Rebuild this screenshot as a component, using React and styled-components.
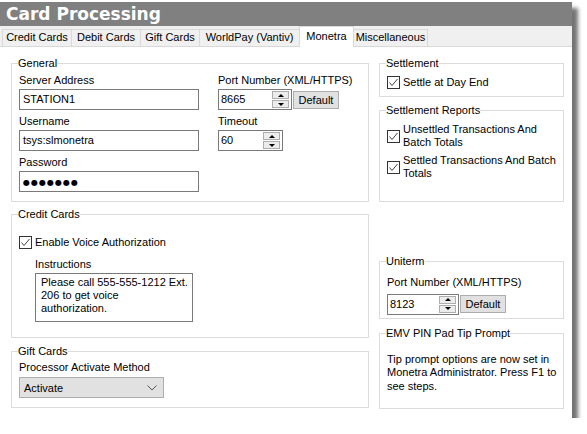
import styled, { createGlobalStyle } from "styled-components";

const GlobalStyle = createGlobalStyle`
  body {
    margin: 0;
    background: #fff;
    font-family: "Liberation Sans", Arial, sans-serif;
    font-size: 11px;
    color: #000;
  }
`;

const tabs = [
  { label: "Credit Cards", width: 70 },
  { label: "Debit Cards", width: 70 },
  { label: "Gift Cards", width: 60 },
  { label: "WorldPay (Vantiv)", width: 101 },
  { label: "Monetra", width: 55, active: true },
  { label: "Miscellaneous", width: 75 },
];

const Check = () => (
  <CheckBox>
    <svg width="11" height="11" viewBox="0 0 11 11">
      <polyline
        points="1.5,5.5 4,8.5 9.5,2"
        fill="none"
        stroke="#444"
        strokeWidth="1"
      />
    </svg>
  </CheckBox>
);

const Spinner = ({ value, width }) => (
  <SpinBox $w={width}>
    <SpinValue>{value}</SpinValue>
    <Arrows>
      <ArrowButton $up />
      <ArrowButton />
    </Arrows>
  </SpinBox>
);

const App = () => {
  return (
    <>
      <GlobalStyle />
      <Window>
        <TitleBar>Card Processing</TitleBar>
        <TabStrip>
          {tabs.map((tab) => (
            <Tab key={tab.label} $w={tab.width} $active={tab.active}>
              {tab.label}
            </Tab>
          ))}
        </TabStrip>
        <Content>
          <Column>
            <Group $pt={4} $pb={9}>
              <Legend>General</Legend>
              <Columns>
                <Stack>
                  <Label>Server Address</Label>
                  <TextBox $w={180}>STATION1</TextBox>
                  <Label $mt={5}>Username</Label>
                  <TextBox $w={180}>tsys:slmonetra</TextBox>
                  <Label $mt={5}>Password</Label>
                  <TextBox $w={180}>
                    <Dots>●●●●●●●</Dots>
                  </TextBox>
                </Stack>
                <Stack>
                  <Label>Port Number (XML/HTTPS)</Label>
                  <SpinRow>
                    <Spinner value="8665" width={74} />
                    <DefaultButton>Default</DefaultButton>
                  </SpinRow>
                  <Label $mt={5}>Timeout</Label>
                  <SpinRow>
                    <Spinner value="60" width={65} />
                  </SpinRow>
                </Stack>
              </Columns>
            </Group>

            <Group $pt={15} $pb={15} $mt={6}>
              <Legend>Credit Cards</Legend>
              <CheckRow>
                <Check />
                <span>Enable Voice Authorization</span>
              </CheckRow>
              <Indent>
                <Label $mt={9}>Instructions</Label>
                <Memo>{"Please call 555-555-1212 Ext.\n206 to get voice\nauthorization."}</Memo>
              </Indent>
            </Group>

            <Group $pt={3} $pb={9} $mt={7}>
              <Legend>Gift Cards</Legend>
              <Label>Processor Activate Method</Label>
              <Select>
                <span>Activate</span>
                <svg width="10" height="6" viewBox="0 0 10 6">
                  <polyline
                    points="0.5,0.5 5,5 9.5,0.5"
                    fill="none"
                    stroke="#555"
                    strokeWidth="1"
                  />
                </svg>
              </Select>
            </Group>
          </Column>

          <Column>
            <Group $pt={6} $pb={7}>
              <Legend>Settlement</Legend>
              <CheckRow>
                <Check />
                <span>Settle at Day End</span>
              </CheckRow>
            </Group>

            <Group $pt={6} $pb={21} $mt={7}>
              <Legend>Settlement Reports</Legend>
              <CheckRow>
                <Check />
                <CheckText $w={156}>Unsettled Transactions And Batch Totals</CheckText>
              </CheckRow>
              <CheckRow $mt={5}>
                <Check />
                <CheckText $w={156}>Settled Transactions And Batch Totals</CheckText>
              </CheckRow>
            </Group>

            <Group $pt={8} $pb={3} $mt="auto">
              <Legend>Uniterm</Legend>
              <Label>Port Number (XML/HTTPS)</Label>
              <SpinRow $mt={5}>
                <Spinner value="8123" width={72} />
                <DefaultButton>Default</DefaultButton>
              </SpinRow>
            </Group>

            <Group $pt={13} $pb={15} $mt={8}>
              <Legend>EMV PIN Pad Tip Prompt</Legend>
              <Note>
                Tip prompt options are now set in Monetra Administrator. Press F1
                to see steps.
              </Note>
            </Group>
          </Column>
        </Content>
      </Window>
    </>
  );
};

export default App;

const Window = styled.div`
  width: 572px;
  height: 416px;
  margin-top: 2px;
  background: #fff;
  box-shadow: 6px 6px 4px rgba(0, 0, 0, 0.55);
  display: flex;
  flex-direction: column;
`;

const TitleBar = styled.div`
  height: 24px;
  background: #808080;
  color: #fff;
  font-family: "DejaVu Sans", sans-serif;
  font-weight: bold;
  font-size: 17px;
  line-height: 24px;
  padding-left: 6px;
`;

const TabStrip = styled.div`
  height: 20px;
  background: #f0f0f0;
  border-bottom: 1px solid #d9d9d9;
  display: flex;
  align-items: flex-end;
  padding-left: 2px;
`;

const Tab = styled.div`
  box-sizing: border-box;
  width: ${(p) => p.$w}px;
  height: ${(p) => (p.$active ? 21 : 17)}px;
  margin-left: -1px;
  margin-bottom: ${(p) => (p.$active ? -1 : 0)}px;
  border: 1px solid #d9d9d9;
  border-bottom: none;
  background: ${(p) => (p.$active ? "#fff" : "#f0f0f0")};
  line-height: ${(p) => (p.$active ? 19 : 15)}px;
  text-align: center;
  white-space: nowrap;
  position: relative;
  z-index: ${(p) => (p.$active ? 1 : 0)};

  &:first-child {
    margin-left: 0;
  }
`;

const Content = styled.div`
  flex: 1;
  display: grid;
  grid-template-columns: 358px 185px;
  column-gap: 10px;
  padding: 10px 0 9px 11px;
`;

const Column = styled.div`
  display: flex;
  flex-direction: column;
`;

const Group = styled.fieldset`
  margin: 0;
  margin-top: ${(p) => (p.$mt === "auto" ? "auto" : `${p.$mt || 0}px`)};
  border: 1px solid #dcdcdc;
  padding: ${(p) => p.$pt}px 2px ${(p) => p.$pb}px 7px;
  min-width: 0;
`;

const Legend = styled.legend`
  padding: 0;
  margin-left: -1px;
  line-height: 13px;
`;

const Columns = styled.div`
  display: flex;
  gap: 19px;
`;

const Stack = styled.div`
  display: flex;
  flex-direction: column;
  align-items: flex-start;
`;

const Indent = styled.div`
  padding-left: 16px;
`;

const Label = styled.div`
  line-height: 13px;
  margin-top: ${(p) => p.$mt || 0}px;
`;

const TextBox = styled.div`
  box-sizing: border-box;
  width: ${(p) => p.$w}px;
  height: 21px;
  margin-top: 2px;
  border: 1px solid #7a7a7a;
  padding-left: 3px;
  line-height: 19px;
  background: #fff;
`;

const Dots = styled.span`
  font-family: "DejaVu Sans", sans-serif;
  font-size: 8px;
  letter-spacing: 1px;
`;

const SpinRow = styled.div`
  display: flex;
  align-items: center;
  gap: 1px;
  margin-top: ${(p) => p.$mt ?? 2}px;
`;

const SpinBox = styled.div`
  box-sizing: border-box;
  width: ${(p) => p.$w}px;
  height: 21px;
  border: 1px solid #7a7a7a;
  padding: 1px 2px 1px 0;
  display: flex;
  align-items: stretch;
  background: #fff;
`;

const SpinValue = styled.span`
  flex: 1;
  padding-left: 2px;
  line-height: 17px;
`;

const Arrows = styled.div`
  width: 17px;
  display: flex;
  flex-direction: column;
  gap: 1px;
`;

const ArrowButton = styled.div`
  flex: 1;
  box-sizing: border-box;
  border: 1px solid #adadad;
  background: #ececec;
  display: flex;
  align-items: center;
  justify-content: center;

  &::after {
    content: "";
    border-left: 3px solid transparent;
    border-right: 3px solid transparent;
    ${(p) =>
      p.$up ? "border-bottom: 3px solid #000;" : "border-top: 3px solid #000;"}
  }
`;

const DefaultButton = styled.div`
  box-sizing: border-box;
  width: 46px;
  height: 18px;
  border: 1px solid #adadad;
  background: #e1e1e1;
  line-height: 16px;
  text-align: center;
`;

const CheckRow = styled.div`
  display: flex;
  align-items: center;
  gap: 3px;
  line-height: 13px;
  margin-top: ${(p) => p.$mt || 0}px;
`;

const CheckBox = styled.div`
  box-sizing: border-box;
  width: 13px;
  height: 13px;
  flex: none;
  border: 1px solid #333;
  background: #fff;
  display: flex;
  align-items: center;
  justify-content: center;
`;

const CheckText = styled.span`
  width: ${(p) => p.$w}px;
`;

const Memo = styled.div`
  box-sizing: border-box;
  width: 158px;
  height: 49px;
  margin-top: 2px;
  border: 1px solid #7a7a7a;
  padding: 2px 3px 0 5px;
  line-height: 13px;
  white-space: pre-line;
`;

const Select = styled.div`
  box-sizing: border-box;
  width: 145px;
  height: 21px;
  margin-top: 3px;
  border: 1px solid #adadad;
  background: #e1e1e1;
  display: flex;
  align-items: center;
  justify-content: space-between;
  padding: 0 6px 0 4px;
`;

const Note = styled.div`
  line-height: 13.5px;
`;
